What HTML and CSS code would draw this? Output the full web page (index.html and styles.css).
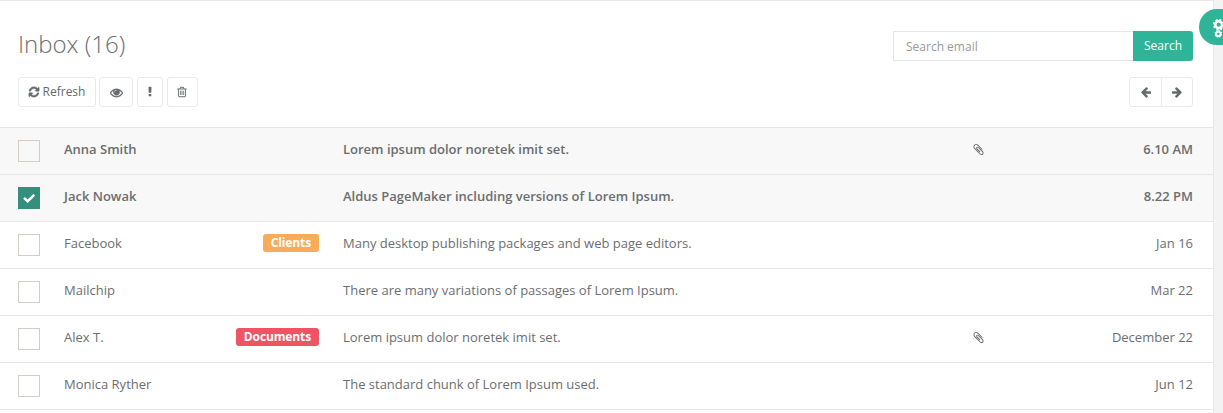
FILE: index.html
```html
<!DOCTYPE html>
<html lang="en">
<head>
<meta charset="utf-8">
<title>Inbox</title>
<link rel="stylesheet" href="styles.css">
</head>
<body>
<svg class="defs" width="0" height="0">
<symbol id="refresh" viewBox="0 0 1792 1792"><path d="M1639 1056q0 5-1 7-64 268-268 434.5t-478 166.5q-146 0-282.5-55t-243.5-157l-129 129q-19 19-45 19t-45-19-19-45v-448q0-26 19-45t45-19h448q26 0 45 19t19 45-19 45l-137 137q71 66 161 102t187 36q134 0 250-65t186-179q11-17 53-117 8-23 30-23h192q13 0 22.5 9.5t9.5 22.5zm25-800v448q0 26-19 45t-45 19h-448q-26 0-45-19t-19-45 19-45l138-138q-148-137-349-137-134 0-250 65t-186 179q-11 17-53 117-8 23-30 23h-199q-13 0-22.5-9.5t-9.5-22.5v-7q65-268 270-434.5t480-166.5q146 0 284 55.5t245 156.5l130-129q19-19 45-19t45 19 19 45z"/></symbol>
<symbol id="eye" viewBox="0 0 1792 1792"><path d="M1664 960q-152-236-381-353 61 104 61 225 0 185-131.5 316.5t-316.5 131.5-316.5-131.5-131.5-316.5q0-121 61-225-229 117-381 353 133 205 333.5 326.5t434.5 121.5 434.5-121.5 333.5-326.5zm-720-384q0-20-14-34t-34-14q-125 0-214.5 89.5t-89.5 214.5q0 20 14 34t34 14 34-14 14-34q0-86 61-147t147-61q20 0 34-14t14-34zm848 384q0 34-20 69-140 230-376.5 368.5t-499.5 138.5-499.5-139-376.5-368q-20-35-20-69t20-69q140-229 376.5-368t499.5-139 499.5 139 376.5 368q20 35 20 69z"/></symbol>
<symbol id="important" viewBox="0 0 1792 1792"><path d="M1088 1248v224q0 26-19 45t-45 19h-256q-26 0-45-19t-19-45v-224q0-26 19-45t45-19h256q26 0 45 19t19 45zm30-1056l-28 768q-1 26-20.5 45t-45.5 19h-256q-26 0-45.5-19t-20.5-45l-28-768q-1-26 17.5-45t44.5-19h320q26 0 44.5 19t17.5 45z"/></symbol>
<symbol id="trash" viewBox="0 0 1792 1792"><path d="M704 736v576q0 14-9 23t-23 9h-64q-14 0-23-9t-9-23v-576q0-14 9-23t23-9h64q14 0 23 9t9 23zm256 0v576q0 14-9 23t-23 9h-64q-14 0-23-9t-9-23v-576q0-14 9-23t23-9h64q14 0 23 9t9 23zm256 0v576q0 14-9 23t-23 9h-64q-14 0-23-9t-9-23v-576q0-14 9-23t23-9h64q14 0 23 9t9 23zm128 724v-948h-896v948q0 22 7 40.5t14.5 27 10.5 8.5h832q3 0 10.5-8.5t14.5-27 7-40.5zm-672-1076h448l-48-117q-7-9-17-11h-317q-10 2-17 11zm928 32v64q0 14-9 23t-23 9h-96v948q0 83-47 143.5t-113 60.5h-832q-66 0-113-58.5t-47-141.5v-952h-96q-14 0-23-9t-9-23v-64q0-14 9-23t23-9h309l70-167q15-37 54-63t79-26h320q40 0 79 26t54 63l70 167h309q14 0 23 9t9 23z"/></symbol>
<symbol id="arrow" viewBox="0 0 1792 1792"><path d="M1664 896v128q0 53-32.5 90.5t-84.5 37.5h-704l293 294q38 36 38 90t-38 90l-75 76q-37 37-90 37-52 0-91-37l-651-652q-37-37-37-90 0-52 37-91l651-650q38-38 91-38 52 0 90 38l75 74q38 38 38 91t-38 91l-293 293h704q52 0 84.5 37.5t32.5 90.5z"/></symbol>
<symbol id="clip" viewBox="0 0 1792 1792"><path d="M1596 1385q0 117-79 196t-196 79q-135 0-235-100l-777-776q-113-115-113-271 0-159 110-270t269-111q158 0 273 113l605 606q10 10 10 22 0 16-30.5 46.5t-46.5 30.5q-13 0-23-10l-606-607q-79-77-181-77-106 0-179 75t-73 181q0 105 76 181l776 777q63 63 145 63 64 0 106-42t42-106q0-82-63-145l-581-581q-26-24-60-24-29 0-48 19t-19 48q0 32 25 59l410 410q10 10 10 22 0 16-31 47t-47 31q-12 0-22-10l-410-410q-63-61-63-149 0-82 57-139t139-57q88 0 149 63l581 581q100 98 100 235z"/></symbol>
</svg>
<main class="panel">
  <header class="head">
    <div class="line">
      <h2 class="title">Inbox (16)</h2>
      <form class="search"><input class="field" type="text" placeholder="Search email"><button class="go" type="button">Search</button></form>
    </div>
    <div class="line tools">
      <div class="group">
        <button class="btn refresh"><svg class="ico"><use href="#refresh"/></svg>Refresh</button>
        <button class="btn view"><svg class="ico"><use href="#eye"/></svg></button>
        <button class="btn mark"><svg class="ico"><use href="#important"/></svg></button>
        <button class="btn remove"><svg class="ico"><use href="#trash"/></svg></button>
      </div>
      <div class="pager">
        <button class="btn prev"><svg class="ico"><use href="#arrow"/></svg></button>
        <button class="btn next"><svg class="ico flip"><use href="#arrow"/></svg></button>
      </div>
    </div>
  </header>
  <section class="mails">
    <div class="row unread"><span class="box"></span><span class="name">Anna Smith</span><span class="tag"></span><span class="subject">Lorem ipsum dolor noretek imit set.</span><svg class="clip"><use href="#clip"/></svg><span class="date">6.10 AM</span></div>
    <div class="row unread"><span class="box checked"><svg class="tick" viewBox="0 0 22 22"><path d="M6 10.8 9.7 14.2 16.2 7.8"/></svg></span><span class="name">Jack Nowak</span><span class="tag"></span><span class="subject">Aldus PageMaker including versions of Lorem Ipsum.</span><span></span><span class="date">8.22 PM</span></div>
    <div class="row"><span class="box"></span><span class="name">Facebook</span><span class="tag"><b class="label warn">Clients</b></span><span class="subject">Many desktop publishing packages and web page editors.</span><span></span><span class="date">Jan 16</span></div>
    <div class="row"><span class="box"></span><span class="name">Mailchip</span><span class="tag"></span><span class="subject">There are many variations of passages of Lorem Ipsum.</span><span></span><span class="date">Mar 22</span></div>
    <div class="row"><span class="box"></span><span class="name">Alex T.</span><span class="tag"><b class="label danger">Documents</b></span><span class="subject">Lorem ipsum dolor noretek imit set.</span><svg class="clip"><use href="#clip"/></svg><span class="date">December 22</span></div>
    <div class="row"><span class="box"></span><span class="name">Monica Ryther</span><span class="tag"></span><span class="subject">The standard chunk of Lorem Ipsum used.</span><span></span><span class="date">Jun 12</span></div>
    <div class="row last"></div>
  </section>
</main>
<aside class="settings"><svg class="gears" width="24" height="36" viewBox="0 0 24 36">
  <circle class="hub" cx="19.7" cy="15.7" r="3.4"/><circle class="teeth" cx="19.7" cy="15.7" r="4.9"/>
  <circle class="hub small" cx="19.3" cy="24.9" r="2.2"/><circle class="teeth small" cx="19.3" cy="24.9" r="3.1"/>
</svg></aside>
</body>
</html>
```
FILE: styles.css
```css
* { box-sizing: border-box; }
body { margin: 0; width: 1223px; height: 413px; overflow: hidden; background: #f3f3f4; font: 13px/18px "Open Sans", sans-serif; color: #6b6e70; }
.defs { position: absolute; }
.panel { width: 1214px; height: 413px; overflow: hidden; background: #fff; border-top: 1px solid #e7eaec; border-right: 1px solid #e7eaec; }
.head { height: 126px; padding: 30px 20px 0 18px; }
.line { display: flex; justify-content: space-between; align-items: flex-start; }
.title { margin: 0; font-size: 24px; line-height: 26px; font-weight: 300; }
.search { display: flex; width: 300px; height: 30px; }
.field { width: 240px; height: 30px; padding: 0 12px; border: 1px solid #e5e6e7; border-right: 0; font: 12px "Open Sans", sans-serif; outline: 0; }
.field::placeholder { color: #999; opacity: 1; }
.go { width: 60px; height: 30px; padding: 0; border: 0; border-radius: 0 3px 3px 0; background: #2fb497; color: #fff; font: 12px/18px "Open Sans", sans-serif; }
.tools { margin-top: 16px; }
.group, .pager { display: flex; }
.btn { display: flex; align-items: center; justify-content: center; height: 30px; padding: 0; border: 1px solid #e7eaec; border-radius: 3px; background: #fff; color: #676a6c; font: 12px/18px "Open Sans", sans-serif; }
.ico { width: 12px; height: 12px; fill: currentColor; }
.refresh { width: 78px; gap: 3px; padding-right: 1px; }
.refresh .ico { stroke: currentColor; stroke-width: 70; }
.view { width: 34px; margin-left: 3px; }
.view .ico { width: 13px; height: 13px; stroke: currentColor; stroke-width: 50; }
.mark { width: 26px; margin-left: 4px; }
.remove { width: 31px; margin-left: 4px; padding-right: 1px; }
.prev { width: 33px; border-radius: 3px 0 0 3px; }
.next { width: 32px; margin-left: -1px; border-radius: 0 3px 3px 0; }
.flip { transform: scaleX(-1); }
.row { display: grid; grid-template-columns: 46px 152px 103px 649px 20px 1fr; align-items: start; height: 47px; padding: 12px 20px 0 18px; border-top: 1px solid #e7e7e7; }
.unread { background: #f8f8f8; font-weight: 600; }
.box { width: 22px; height: 22px; border: 1px solid #d2cdc7; }
.checked { border: 0; background: #368f7c; }
.tick { display: block; width: 22px; height: 22px; fill: none; stroke: #fff; stroke-width: 2.5; }
.name, .subject, .date { white-space: nowrap; }
.subject { padding-left: 24px; }
.date { text-align: right; }
.tag { display: flex; justify-content: flex-end; }
.label { height: 18px; padding: 0 8px; border-radius: 3px; color: #fff; font-size: 12px; font-weight: 700; line-height: 17px; letter-spacing: -0.13px; }
.warn { background: #f8ac59; }
.danger { background: #ed5565; }
.clip { width: 13px; height: 13px; margin: 3px 0 0 4px; fill: #676a6c; }
.settings { position: absolute; top: 9px; left: 1199px; width: 24px; height: 36px; border-radius: 18px 0 0 18px; background: #2fb497; overflow: hidden; }
.gears { display: block; fill: none; stroke: #fff; }
.hub { stroke-width: 2.6; }
.teeth { stroke-width: 1.9; stroke-dasharray: 2.1 1.748; }
.hub.small { stroke-width: 1.9; }
.teeth.small { stroke-width: 1.5; stroke-dasharray: 1.4 1.035; }
```
